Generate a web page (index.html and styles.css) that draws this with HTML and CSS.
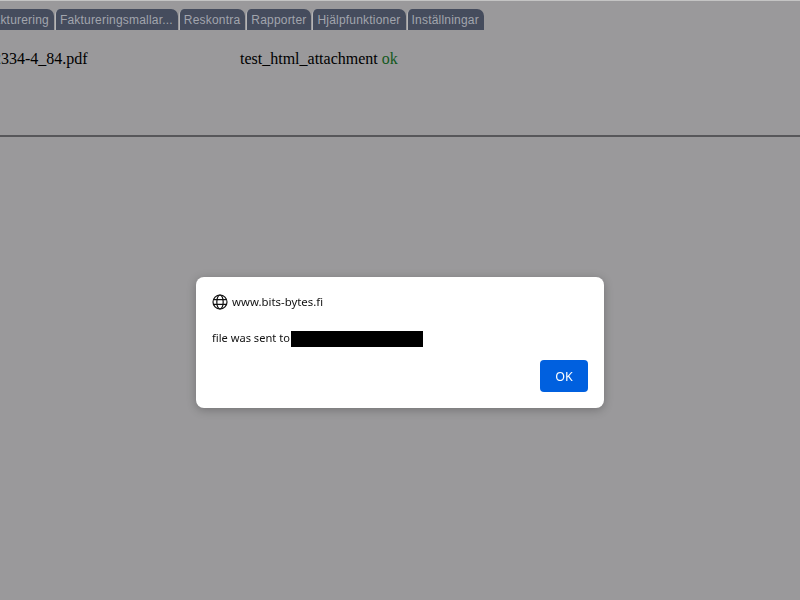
FILE: index.html
```html
<!DOCTYPE html>
<html lang="sv">
<head>
<meta charset="utf-8">
<title>www.bits-bytes.fi</title>
<link rel="stylesheet" href="styles.css">
</head>
<body>
<div class="page">
  <nav class="tabs">
    <a class="tab tab-first">Fakturering</a>
    <a class="tab">Faktureringsmallar...</a>
    <a class="tab">Reskontra</a>
    <a class="tab">Rapporter</a>
    <a class="tab">Hjälpfunktioner</a>
    <a class="tab">Inställningar</a>
  </nav>
  <div class="result">
    <span class="file">12334-4_84.pdf</span>
    <span class="status">test_html_attachment <span class="ok">ok</span></span>
  </div>
  <hr class="rule">
</div>
<div class="overlay">
  <div class="dialog" role="alertdialog">
    <div class="origin">
      <svg class="globe" width="16" height="16" viewBox="0 0 16 16" fill="none" stroke="#111" stroke-width="1.2">
        <circle cx="8" cy="8" r="7"/>
        <ellipse cx="8" cy="8" rx="3.2" ry="7"/>
        <path d="M1.3 5.6h13.4M1.3 10.4h13.4"/>
      </svg>
      <span>www.bits-bytes.fi</span>
    </div>
    <div class="message">file was sent to<span class="redacted"></span></div>
    <div class="actions"><button class="ok-button">OK</button></div>
  </div>
</div>
</body>
</html>
```
FILE: styles.css
```css
html, body {
  margin: 0;
  height: 100%;
  overflow: hidden;
}
body {
  background: #9a999b;
  font-family: "Liberation Serif", serif;
  color: #000;
}
.page {
  border-top: 1px solid #c4c4c4;
}
.tabs {
  display: flex;
  gap: 1px;
  margin: 8px 0 0 -19px;
  height: 21px;
  font-family: "Liberation Sans", sans-serif;
  font-size: 12px;
}
.tab {
  display: flex;
  align-items: center;
  padding: 0 5px 0 4px;
  background: #454c5d;
  color: #a2a5ad;
  border-left: 1px solid #b5b5b7;
  border-radius: 5px 7px 0 0;
  white-space: nowrap;
  letter-spacing: 0.2px;
}
.result {
  display: flex;
  margin: 20px 0 0 -15px;
  font-size: 16px;
  line-height: 18px;
}
.file {
  width: 255px;
}
.ok {
  color: #12581c;
}
.rule {
  margin: 67px 0 0;
  border: 0;
  height: 2px;
  background: #57575a;
}
.overlay {
  position: fixed;
  inset: 0;
  display: flex;
  align-items: flex-start;
  justify-content: center;
  padding-top: 277px;
  font-family: "Noto Sans", sans-serif;
  font-size: 11.4px;
}
.dialog {
  box-sizing: border-box;
  width: 408px;
  height: 131px;
  padding: 16px;
  background: #fff;
  border-radius: 8px;
  box-shadow: 0 2px 10px rgba(0, 0, 0, 0.25);
  color: #111;
}
.origin {
  display: flex;
  align-items: center;
  gap: 4px;
  height: 17px;
}
.globe {
  flex: none;
}
.message {
  display: flex;
  align-items: flex-start;
  margin-top: 21px;
  height: 16px;
  font-size: 11.1px;
  line-height: 13px;
}
.redacted {
  width: 132px;
  height: 16px;
  margin-left: 1px;
  background: #000;
}
.actions {
  display: flex;
  justify-content: flex-end;
  margin-top: 13px;
}
.ok-button {
  width: 48px;
  height: 32px;
  border: 0;
  border-radius: 4px;
  background: #0060df;
  color: #fff;
  font: inherit;
  font-size: 12.5px;
}
```
